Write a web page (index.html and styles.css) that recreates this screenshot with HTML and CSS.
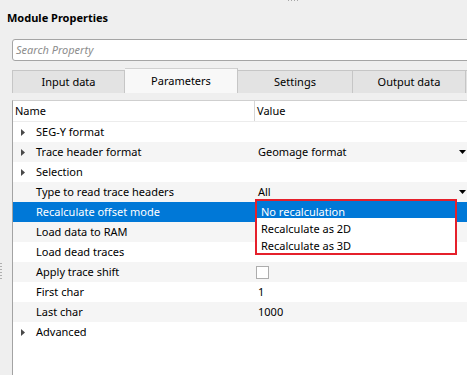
FILE: index.html
```html
<!DOCTYPE html>
<html lang="en">
<head>
    <title>Module Properties</title>
    <link rel="stylesheet" href="styles.css">
</head>
<body>
    <div class="dock">
        <div class="grip-top"></div>
        <h1 class="title">Module Properties</h1>

        <div class="search"><span class="placeholder">Search Property</span></div>

        <div class="tabs">
            <div class="tab">Input data</div>
            <div class="tab active">Parameters</div>
            <div class="tab wide">Settings</div>
            <div class="tab">Output data</div>
            <div class="tab"></div>
        </div>

        <div class="panel">
            <div class="header">
                <div class="col-name">Name</div>
                <div class="col-value">Value</div>
            </div>

            <div class="row">
                <div class="name"><span class="branch"><svg width="4" height="7" viewBox="0 0 4 7"><polygon points="0,0 4,3.5 0,7" fill="#4a4a4a"/></svg></span>SEG-Y format</div>
                <div class="value"></div>
            </div>
            <div class="row alt">
                <div class="name"><span class="branch"><svg width="4" height="7" viewBox="0 0 4 7"><polygon points="0,0 4,3.5 0,7" fill="#4a4a4a"/></svg></span>Trace header format</div>
                <div class="value">Geomage format<svg class="drop" width="7" height="4" viewBox="0 0 7 4"><polygon points="0,0 7,0 3.5,4" fill="#000"/></svg></div>
            </div>
            <div class="row">
                <div class="name"><span class="branch"><svg width="4" height="7" viewBox="0 0 4 7"><polygon points="0,0 4,3.5 0,7" fill="#4a4a4a"/></svg></span>Selection</div>
                <div class="value"></div>
            </div>
            <div class="row alt">
                <div class="name"><span class="branch"></span>Type to read trace headers</div>
                <div class="value">All<svg class="drop" width="7" height="4" viewBox="0 0 7 4"><polygon points="0,0 7,0 3.5,4" fill="#000"/></svg></div>
            </div>
            <div class="row selected">
                <div class="name"><span class="branch"></span>Recalculate offset mode</div>
                <div class="value"></div>
            </div>
            <div class="row alt">
                <div class="name"><span class="branch"></span>Load data to RAM</div>
                <div class="value"></div>
            </div>
            <div class="row">
                <div class="name"><span class="branch"></span>Load dead traces</div>
                <div class="value"></div>
            </div>
            <div class="row alt">
                <div class="name"><span class="branch"></span>Apply trace shift</div>
                <div class="value"><span class="checkbox"></span></div>
            </div>
            <div class="row">
                <div class="name"><span class="branch"></span>First char</div>
                <div class="value">1</div>
            </div>
            <div class="row alt">
                <div class="name"><span class="branch"></span>Last char</div>
                <div class="value">1000</div>
            </div>
            <div class="row">
                <div class="name"><span class="branch"><svg width="4" height="7" viewBox="0 0 4 7"><polygon points="0,0 4,3.5 0,7" fill="#4a4a4a"/></svg></span>Advanced</div>
                <div class="value"></div>
            </div>

            <ul class="popup">
                <li class="current">No recalculation</li>
                <li>Recalculate as 2D</li>
                <li>Recalculate as 3D</li>
            </ul>
            <div class="highlight"></div>
        </div>

        <div class="grip-left"></div>
    </div>
</body>
</html>
```

FILE: styles.css
```css
body {
    margin: 0;
    background: #efefef;
    font-family: 'Segoe UI', 'Noto Sans', sans-serif;
    font-size: 11px;
    color: #000;
    overflow: hidden;
}
.dock {
    position: relative;
    width: 467px;
    height: 375px;
    overflow: hidden;
}
.grip-top {
    position: absolute;
    top: 0;
    left: 288px;
    width: 10px;
    height: 1px;
    background: repeating-linear-gradient(90deg, #a8a8a8 0 1px, transparent 1px 3px);
}
.grip-left {
    position: absolute;
    left: 0;
    top: 263px;
    width: 2px;
    height: 17px;
    background: repeating-linear-gradient(180deg, #b0b0b0 0 1px, transparent 1px 3px);
}
.title {
    margin: 0;
    padding: 10px 7px 0;
    font-size: 11px;
    font-weight: 700;
    line-height: 16px;
}
.search {
    margin: 13px 0 0 12px;
    width: 480px;
    height: 22px;
    box-sizing: border-box;
    background: #fff;
    border: 1px solid #a5a5a5;
    border-radius: 3px;
}
.placeholder {
    display: block;
    padding-left: 3px;
    line-height: 20px;
    font-style: italic;
    color: #8c8c8c;
}
.tabs {
    display: flex;
    align-items: flex-end;
    height: 25px;
    margin: 7px 0 0 12px;
}
.tab {
    flex: none;
    box-sizing: border-box;
    width: 113px;
    height: 23px;
    line-height: 22px;
    text-align: center;
    background: #e3e3e3;
    border: 1px solid #c6c6c6;
    border-bottom: none;
    border-left: none;
}
.tab:first-child {
    border-left: 1px solid #c6c6c6;
}
.tab.wide {
    width: 115px;
}
.tab.active {
    height: 25px;
    line-height: 24px;
    background: #f8f8f8;
    border-top-color: #d0d0d0;
}
.panel {
    position: relative;
    margin: 7px 0 0 12px;
    height: 300px;
    background: #fff;
    border-left: 1px solid #a3a3a3;
    border-top: 1px solid #cfcfcf;
}
.header {
    display: grid;
    grid-template-columns: 242px 1fr;
    height: 21px;
    box-sizing: border-box;
    border-bottom: 1px solid #ececec;
    line-height: 20px;
}
.col-name {
    padding-left: 2px;
    border-right: 1px solid #d6d6d6;
}
.col-value {
    padding-left: 2px;
}
.row {
    display: grid;
    grid-template-columns: 242px 1fr;
    height: 20px;
    line-height: 20px;
}
.row.alt {
    background: #f5f5f5;
}
.row.selected {
    background: #0078d7;
    color: #fff;
}
.name {
    display: flex;
    align-items: center;
    padding-left: 8px;
    white-space: nowrap;
}
.branch {
    display: flex;
    align-items: center;
    width: 15px;
    height: 20px;
}
.value {
    display: flex;
    align-items: center;
    justify-content: space-between;
    padding: 0 1px 0 3px;
}
.drop {
    flex: none;
}
.checkbox {
    width: 13px;
    height: 13px;
    margin-left: -2px;
    box-sizing: border-box;
    border: 1px solid #adadad;
    background: #fff;
}
.popup {
    position: absolute;
    left: 244px;
    top: 100px;
    width: 198px;
    margin: 0;
    padding: 0 0 1px;
    list-style: none;
    background: #fff;
    box-shadow: 0 1px 0 #9c9c9c;
}
.popup li {
    height: 17px;
    line-height: 21px;
    padding-left: 4px;
}
.popup li.current {
    background: #0078d7;
    color: #fff;
}
.highlight {
    position: absolute;
    left: 242px;
    top: 98px;
    width: 202px;
    height: 56px;
    box-sizing: border-box;
    border: 2px solid #e5202b;
}
```
